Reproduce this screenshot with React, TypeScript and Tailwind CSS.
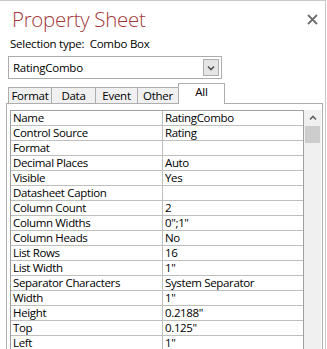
const rows: [string, string][] = [
  ['Name', 'RatingCombo'],
  ['Control Source', 'Rating'],
  ['Format', ''],
  ['Decimal Places', 'Auto'],
  ['Visible', 'Yes'],
  ['Datasheet Caption', ''],
  ['Column Count', '2'],
  ['Column Widths', '0";1"'],
  ['Column Heads', 'No'],
  ['List Rows', '16'],
  ['List Width', '1"'],
  ['Separator Characters', 'System Separator'],
  ['Width', '1"'],
  ['Height', '0.2188"'],
  ['Top', '0.125"'],
  ['Left', '1"'],
]

const tabs = [
  { label: 'Format', w: 'w-[44px]' },
  { label: 'Data', w: 'w-[45px]' },
  { label: 'Event', w: 'w-[43px]' },
  { label: 'Other', w: 'w-[42px]' },
]

export default function App() {
  return (
    <div className="w-[327px] h-[349px] bg-white overflow-hidden text-black" style={{ fontFamily: '"Open Sans", "Noto Sans", sans-serif' }}>
      <div className="w-[326px] h-full border-t border-r border-[#c8c8c8] flex flex-col">
        <div className="flex items-start justify-between pl-[12px] pr-[7px] pt-[6px] h-[36px]">
          <h1 className="m-0 text-[20.5px] leading-[25px] font-light text-[#a4373a] tracking-[-0.3px]">Property Sheet</h1>
          <svg width="11" height="11" viewBox="0 0 11 11" className="mt-[7px]">
            <path d="M1 1L10 10M10 1L1 10" stroke="#6f6f6f" strokeWidth="1.8" />
          </svg>
        </div>
        <div className="pl-[10px] text-[11.5px] leading-[14px] h-[19px] tracking-[-0.25px]">Selection type:&nbsp; Combo Box</div>
        <div className="ml-[8px] w-[214px] h-[23px] border border-[#ababab] flex items-center justify-between pl-[4px] pr-[2px]">
          <span className="text-[11.5px] tracking-[-0.25px]">RatingCombo</span>
          <div className="w-[16px] h-[17px] border border-[#adadad] bg-[#e5e5e5] flex items-center justify-center">
            <svg width="8" height="6" viewBox="0 0 8 6">
              <path d="M1 1.5L4 4.5L7 1.5" fill="none" stroke="#555" strokeWidth="1.6" />
            </svg>
          </div>
        </div>
        <div className="flex items-end ml-[8px] mt-[4px] h-[20px] relative z-10 text-[11.5px] tracking-[-0.25px]">
          {tabs.map((t) => (
            <div
              key={t.label}
              className={`${t.w} h-[16px] -mr-px border border-b-0 border-[#adadad] bg-[#f0f0f0] flex items-center justify-center leading-[14px]`}
            >
              {t.label}
            </div>
          ))}
          <div className="w-[47px] h-[21px] -mb-px border border-b-0 border-[#adadad] bg-white flex justify-center pt-[1px] leading-[14px]">
            All
          </div>
        </div>
        <div className="ml-[6px] w-[317px] flex-1 border-l border-t border-r border-[#adadad] pl-[3px] pr-[1px] pt-[6px] flex items-start min-h-0 overflow-hidden">
          <div className="w-[294px] border-l border-t border-[#a0a0a0] border-r">
            {rows.map(([k, v]) => (
              <div key={k} className="flex h-[15px] border-b border-[#bebebe] text-[11.5px] leading-[14px] tracking-[-0.35px]">
                <div className="w-[152px] pl-[2px] border-r border-[#bebebe] whitespace-nowrap">{k}</div>
                <div className="flex-1 pl-[2px] whitespace-nowrap">{v}</div>
              </div>
            ))}
          </div>
          <div className="w-[17px] self-stretch bg-[#f0f0f0] flex flex-col items-center">
            <div className="h-[16px] flex items-center justify-center">
              <svg width="8" height="6" viewBox="0 0 8 6">
                <path d="M1 4.5L4 1.5L7 4.5" fill="none" stroke="#606060" strokeWidth="1.6" />
              </svg>
            </div>
            <div className="w-[15px] h-[17px] bg-[#cdcdcd]" />
          </div>
        </div>
      </div>
    </div>
  )
}
